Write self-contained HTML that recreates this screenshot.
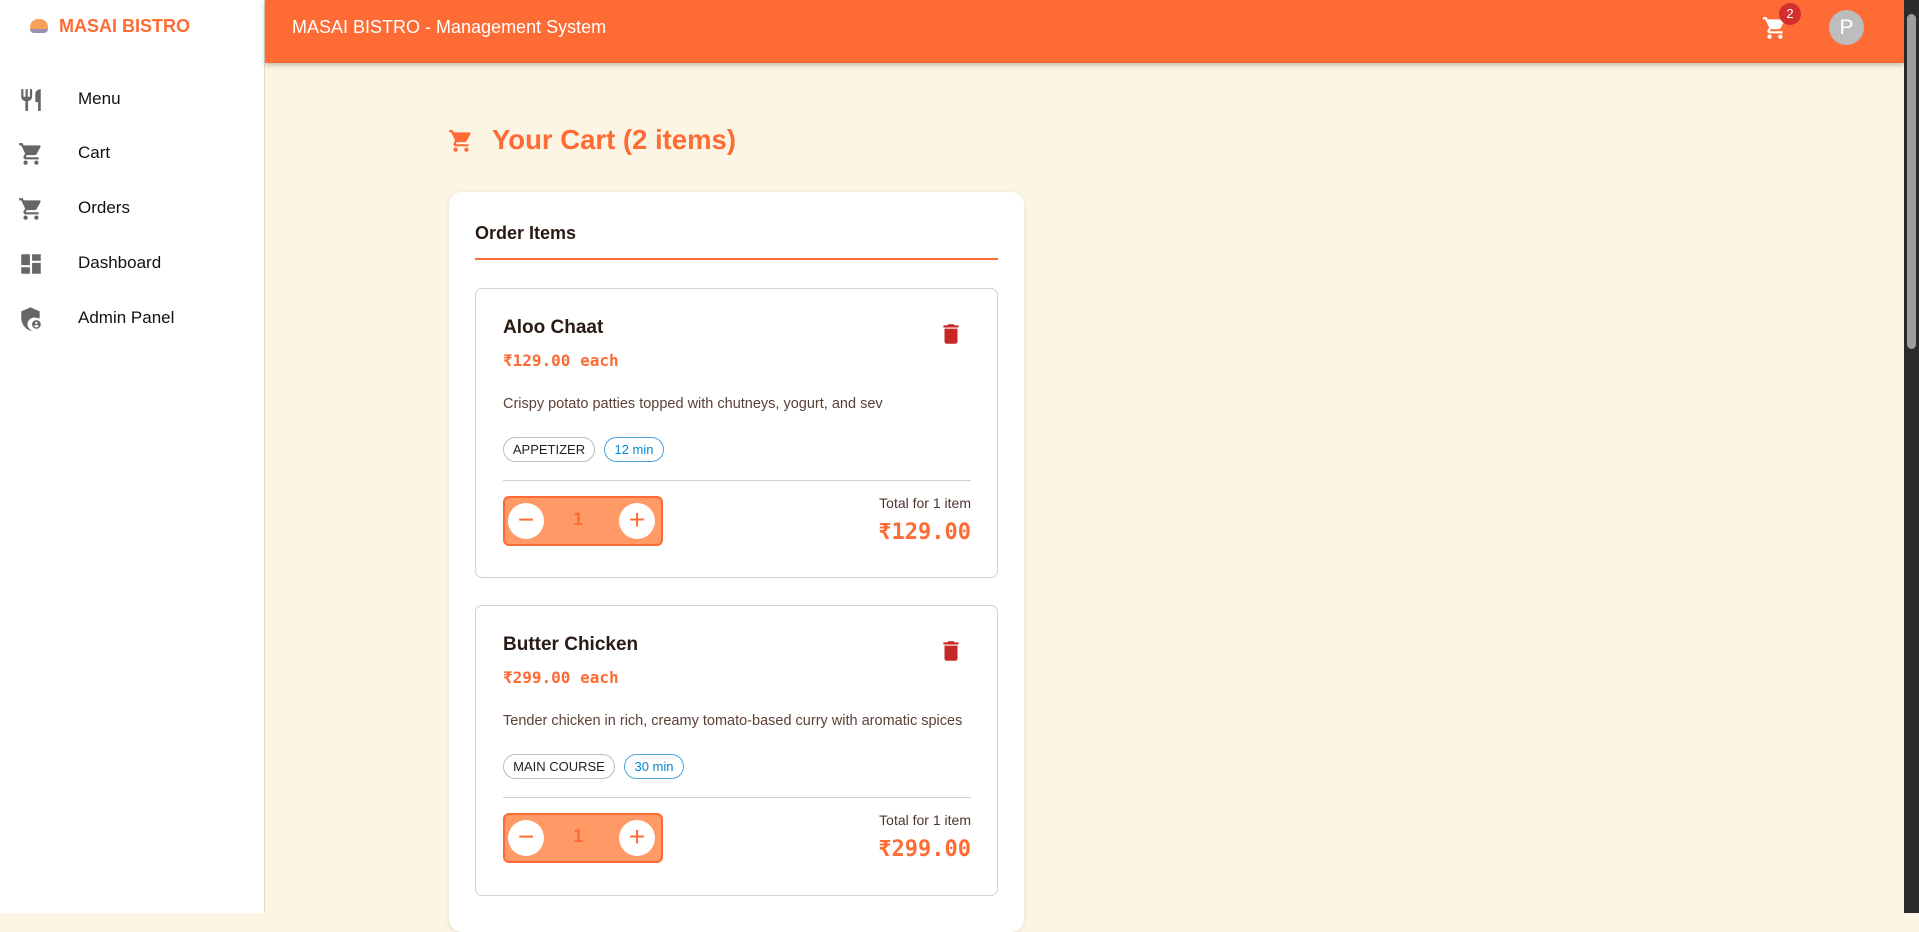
<!DOCTYPE html>
<html><head><meta charset="utf-8"><style>
*{box-sizing:border-box;margin:0;padding:0}
body{width:1919px;height:913px;overflow:hidden;background:#fcf5e3;font-family:"Liberation Sans",sans-serif;position:relative}
.a{position:absolute}
.side{left:0;top:0;width:265px;height:913px;background:#fff;border-right:1px solid #e0d8cc}
.nav{left:0;width:265px;height:30px;font-size:17px;color:#111}
.nav span{position:absolute;left:78px;top:5px}
.nav svg{position:absolute;left:18px;top:3px}
.hdr{left:265px;top:0;width:1639px;height:63px;background:#ff6b35;box-shadow:0 2px 5px rgba(0,0,0,.25)}
.sb{left:1904px;top:0;width:15px;height:913px;background:#2b2b2b}
.mono{font-family:"DejaVu Sans Mono","Liberation Mono",monospace;font-weight:bold;color:#ff6b35}
.card{left:449px;top:192px;width:575px;height:740px;background:#fff;border-radius:13px;box-shadow:0 1px 4px rgba(0,0,0,.1)}
.item{left:475px;width:523px;border:1px solid #d8d0cc;border-radius:7px;background:#fff}
.chip{position:absolute;height:25px;border-radius:13px;font-size:13px;line-height:23px;text-align:center}
.qty{position:absolute;left:27px;width:160px;height:50px;background:#ff9966;border:2px solid #ff6b35;border-radius:6px}
.qb{position:absolute;top:5px;width:36px;height:36px;border-radius:50%;background:#fff;color:#ff6b35;font-size:28px;line-height:34px;text-align:center}
</style></head><body>
<div class="a side">
 <div class="a" style="left:30px;top:19px;width:18px;height:14px;border-radius:8px 8px 4px 4px;background:#f4a25a;border-bottom:4px solid #9a8fb0"></div>
 <div class="a" style="left:59px;top:16px;font-size:18px;font-weight:bold;color:#ff6b35">MASAI BISTRO</div>
 <div class="a nav" style="top:84px"><svg width="26" height="26" viewBox="0 0 24 24"><path fill="#666" d="M11 9H9V2H7v7H5V2H3v7c0 2.1 1.7 3.8 3.8 4V22h2.5v-9c2.1-.2 3.7-1.9 3.7-4V2h-2v7zm5-3v8h2.5v8H21V2c-2.8 0-5 2.2-5 4z"/></svg><span>Menu</span></div>
 <div class="a nav" style="top:138px"><svg width="26" height="26" viewBox="0 0 24 24"><path fill="#666" d="M7 18c-1.1 0-2 .9-2 2s.9 2 2 2 2-.9 2-2-.9-2-2-2zM1 2v2h2l3.6 7.6-1.4 2.4c-.1.3-.2.6-.2 1 0 1.1.9 2 2 2h12v-2H7.4c-.1 0-.2-.1-.2-.2v-.1l.9-1.7h7.4c.8 0 1.4-.4 1.7-1l3.6-6.5c.1-.2.1-.3.1-.5 0-.6-.4-1-1-1H5.2l-.9-2H1zm16 16c-1.1 0-2 .9-2 2s.9 2 2 2 2-.9 2-2-.9-2-2-2z"/></svg><span>Cart</span></div>
 <div class="a nav" style="top:193px"><svg width="26" height="26" viewBox="0 0 24 24"><path fill="#666" d="M7 18c-1.1 0-2 .9-2 2s.9 2 2 2 2-.9 2-2-.9-2-2-2zM1 2v2h2l3.6 7.6-1.4 2.4c-.1.3-.2.6-.2 1 0 1.1.9 2 2 2h12v-2H7.4c-.1 0-.2-.1-.2-.2v-.1l.9-1.7h7.4c.8 0 1.4-.4 1.7-1l3.6-6.5c.1-.2.1-.3.1-.5 0-.6-.4-1-1-1H5.2l-.9-2H1zm16 16c-1.1 0-2 .9-2 2s.9 2 2 2 2-.9 2-2-.9-2-2-2z"/></svg><span>Orders</span></div>
 <div class="a nav" style="top:248px"><svg width="26" height="26" viewBox="0 0 24 24"><path fill="#666" d="M3 13h8V3H3v10zm0 8h8v-6H3v6zm10 0h8V11h-8v10zm0-18v6h8V3h-8z"/></svg><span>Dashboard</span></div>
 <div class="a nav" style="top:303px"><svg width="26" height="26" viewBox="0 0 24 24"><path fill="#666" d="M12 1L3 5v6c0 5.5 3.8 10.7 9 12 .3-.1.6-.2.9-.3A6 6 0 0 1 17 11c1.1 0 2.1.3 3 .8V5l-9-4zm5 12a4 4 0 1 0 0 8 4 4 0 0 0 0-8zm0 1.5c.6 0 1.1.5 1.1 1.1s-.5 1.1-1.1 1.1-1.1-.5-1.1-1.1.5-1.1 1.1-1.1zm0 5.2c-.9 0-1.7-.5-2.2-1.1.1-.7 1.5-1.1 2.2-1.1s2.1.4 2.2 1.1c-.5.7-1.3 1.1-2.2 1.1z"/></svg><span>Admin Panel</span></div>
</div>
<div class="a hdr">
 <div class="a" style="left:27px;top:17px;font-size:18px;color:#fff">MASAI BISTRO - Management System</div>
 <svg class="a" style="left:1497px;top:15px" width="26" height="26" viewBox="0 0 24 24"><path fill="#fff" d="M7 18c-1.1 0-2 .9-2 2s.9 2 2 2 2-.9 2-2-.9-2-2-2zM1 2v2h2l3.6 7.6-1.4 2.4c-.1.3-.2.6-.2 1 0 1.1.9 2 2 2h12v-2H7.4c-.1 0-.2-.1-.2-.2v-.1l.9-1.7h7.4c.8 0 1.4-.4 1.7-1l3.6-6.5c.1-.2.1-.3.1-.5 0-.6-.4-1-1-1H5.2l-.9-2H1zm16 16c-1.1 0-2 .9-2 2s.9 2 2 2 2-.9 2-2-.9-2-2-2z"/></svg>
 <div class="a" style="left:1514px;top:3px;width:22px;height:22px;border-radius:50%;background:#d32f2f;color:#fff;font-size:13px;line-height:22px;text-align:center">2</div>
 <div class="a" style="left:1564px;top:10px;width:35px;height:35px;border-radius:50%;background:#bdbdbd;color:#fff;font-size:21px;line-height:35px;text-align:center">P</div>
</div>
<div class="a sb"><div class="a" style="left:3px;top:14px;width:9px;height:335px;background:#9e9e9e;border-radius:5px"></div></div>

<svg class="a" style="left:448px;top:128px" width="26" height="26" viewBox="0 0 24 24"><path fill="#ff6b35" d="M7 18c-1.1 0-2 .9-2 2s.9 2 2 2 2-.9 2-2-.9-2-2-2zM1 2v2h2l3.6 7.6-1.4 2.4c-.1.3-.2.6-.2 1 0 1.1.9 2 2 2h12v-2H7.4c-.1 0-.2-.1-.2-.2v-.1l.9-1.7h7.4c.8 0 1.4-.4 1.7-1l3.6-6.5c.1-.2.1-.3.1-.5 0-.6-.4-1-1-1H5.2l-.9-2H1zm16 16c-1.1 0-2 .9-2 2s.9 2 2 2 2-.9 2-2-.9-2-2-2z"/></svg>
<div class="a" style="left:492px;top:124px;font-size:27.5px;font-weight:bold;color:#ff6b35">Your Cart (2 items)</div>

<div class="a card"></div>
<div class="a" style="left:475px;top:223px;font-size:18px;font-weight:bold;color:#2a1a14">Order Items</div>
<div class="a" style="left:475px;top:258px;width:523px;height:2px;background:#ff6b35"></div>

<div class="a item" style="top:288px;height:290px">
 <div class="a" style="left:27px;top:28px;font-size:19px;font-weight:bold;color:#2a1a14">Aloo Chaat</div>
 <svg class="a" style="left:462px;top:32px" width="26" height="26" viewBox="0 0 24 24"><path fill="#c62828" d="M6 19c0 1.1.9 2 2 2h8c1.1 0 2-.9 2-2V7H6v12zM19 4h-3.5l-1-1h-5l-1 1H5v2h14V4z"/></svg>
 <div class="a mono" style="left:27px;top:62px;font-size:16px">₹129.00 each</div>
 <div class="a" style="left:27px;top:107px;font-size:14.5px;color:#5d4037">Crispy potato patties topped with chutneys, yogurt, and sev</div>
 <div class="chip" style="left:27px;top:148px;width:92px;border:1px solid #bdbdbd;color:#222">APPETIZER</div>
 <div class="chip" style="left:128px;top:148px;width:60px;border:1px solid #4aa3df;color:#0288d1">12 min</div>
 <div class="a" style="left:27px;top:191px;width:468px;height:1px;background:#d8ccc8"></div>
 <div class="qty" style="top:207px"><div class="qb" style="left:3px">−</div><div class="a mono" style="left:68px;top:12px;font-size:17px">1</div><div class="qb" style="left:114px">+</div></div>
 <div class="a" style="right:26px;top:206px;font-size:14px;color:#4e342e">Total for 1 item</div>
 <div class="a mono" style="right:26px;top:231px;font-size:22px">₹129.00</div>
</div>

<div class="a item" style="top:605px;height:291px">
 <div class="a" style="left:27px;top:28px;font-size:19px;font-weight:bold;color:#2a1a14">Butter Chicken</div>
 <svg class="a" style="left:462px;top:32px" width="26" height="26" viewBox="0 0 24 24"><path fill="#c62828" d="M6 19c0 1.1.9 2 2 2h8c1.1 0 2-.9 2-2V7H6v12zM19 4h-3.5l-1-1h-5l-1 1H5v2h14V4z"/></svg>
 <div class="a mono" style="left:27px;top:62px;font-size:16px">₹299.00 each</div>
 <div class="a" style="left:27px;top:107px;font-size:14.5px;color:#5d4037">Tender chicken in rich, creamy tomato-based curry with aromatic spices</div>
 <div class="chip" style="left:27px;top:148px;width:112px;border:1px solid #bdbdbd;color:#222">MAIN COURSE</div>
 <div class="chip" style="left:148px;top:148px;width:60px;border:1px solid #4aa3df;color:#0288d1">30 min</div>
 <div class="a" style="left:27px;top:191px;width:468px;height:1px;background:#d8ccc8"></div>
 <div class="qty" style="top:207px"><div class="qb" style="left:3px">−</div><div class="a mono" style="left:68px;top:12px;font-size:17px">1</div><div class="qb" style="left:114px">+</div></div>
 <div class="a" style="right:26px;top:206px;font-size:14px;color:#4e342e">Total for 1 item</div>
 <div class="a mono" style="right:26px;top:231px;font-size:22px">₹299.00</div>
</div>
</body></html>
